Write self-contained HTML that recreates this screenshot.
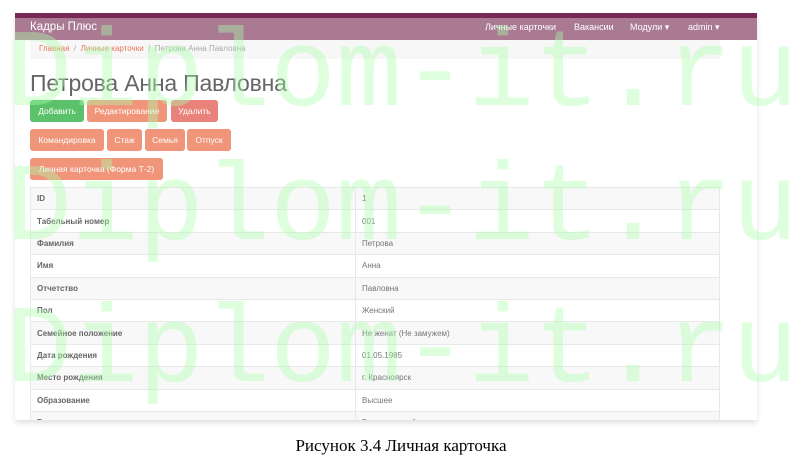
<!DOCTYPE html>
<html><head><meta charset="utf-8"><style>
*{margin:0;padding:0;box-sizing:border-box}
body{width:802px;height:460px;background:#fff;position:relative;overflow:hidden;font-family:"Liberation Sans","DejaVu Sans",sans-serif;color:#555}
.shot{position:absolute;left:15px;top:13px;width:742px;height:407px;background:#fff;overflow:hidden;box-shadow:0 3px 5px rgba(0,0,0,0.12)}
.strip{position:absolute;left:0;top:0;width:742px;height:5px;background:#772953}
.nav{position:absolute;left:0;top:5px;width:742px;height:22px;background:#a97a92;color:#fff;font-size:10px}
.nav .brand{position:absolute;left:15px;top:3px;font-size:11.5px}
.nav span{position:absolute;top:4px;font-size:9px}
.bc{position:absolute;left:15px;top:27px;width:690px;height:19px;background:#f7f7f7;font-size:8px;padding:4px 0 0 9px;color:#aaa}
.bc a{color:#e9755a}
h1{position:absolute;left:15px;top:57px;font-weight:normal;font-size:23px;color:#666;letter-spacing:-0.2px}
.btn{position:absolute;height:22px;border-radius:3px;color:#fff;font-size:8.5px;line-height:22px;text-align:center;background:#f0957a}
table{position:absolute;left:15px;top:174px;width:690px;border-collapse:collapse;font-size:8px}
td{border:1px solid #e8e8e8;height:22.4px;padding:0 6px;color:#777}
td:first-child{font-weight:bold;width:325px;color:#666}
tr:nth-child(odd) td{background:#f8f8f8}
.wm{position:absolute;left:6px;font-family:"Liberation Mono",monospace;font-size:110px;color:rgba(170,255,170,0.4);line-height:1;white-space:nowrap;letter-spacing:0}
.cap{position:absolute;top:436px;left:0;width:802px;text-align:center;font-family:"Liberation Serif",serif;font-size:17px;color:#000}
</style></head><body>
<div class="shot">
<div class="strip"></div>
<div class="nav"><div class="brand">Кадры Плюс</div>
<span style="left:470px">Личные карточки</span><span style="left:559px">Вакансии</span><span style="left:615px">Модули ▾</span><span style="left:673px">admin ▾</span></div>
<div class="bc"><a>Главная</a> &nbsp;/&nbsp; <a>Личные карточки</a> &nbsp;/&nbsp; Петрова Анна Павловна</div>
<h1>Петрова Анна Павловна</h1>
<div class="btn" style="left:15px;top:87px;width:54px;background:#5bc16a">Добавить</div>
<div class="btn" style="left:72px;top:87px;width:80px">Редактирование</div>
<div class="btn" style="left:156px;top:87px;width:47px;background:#e9827a">Удалить</div>
<div class="btn" style="left:15px;top:116px;width:74px">Командировка</div>
<div class="btn" style="left:92px;top:116px;width:35px">Стаж</div>
<div class="btn" style="left:130px;top:116px;width:40px">Семья</div>
<div class="btn" style="left:172px;top:116px;width:44px">Отпуск</div>
<div class="btn" style="left:15px;top:145px;width:133px">Личная карточка (Форма Т-2)</div>
<table>
<tr><td>ID</td><td>1</td></tr>
<tr><td>Табельный номер</td><td>001</td></tr>
<tr><td>Фамилия</td><td>Петрова</td></tr>
<tr><td>Имя</td><td>Анна</td></tr>
<tr><td>Отчетство</td><td>Павловна</td></tr>
<tr><td>Пол</td><td>Женский</td></tr>
<tr><td>Семейное положение</td><td>Не женат (Не замужем)</td></tr>
<tr><td>Дата рождения</td><td>01.05.1985</td></tr>
<tr><td>Место рождения</td><td>г. Красноярск</td></tr>
<tr><td>Образование</td><td>Высшее</td></tr>
<tr><td>Гражданство</td><td>Гражданство 1</td></tr>
</table>
</div>
<div class="wm" style="top:22px">Diplom-it.ru</div>
<div class="wm" style="top:156px">Diplom-it.ru</div>
<div class="wm" style="top:298px">Diplom-it.ru</div>
<div class="cap">Рисунок 3.4 Личная карточка</div>
</body></html>
